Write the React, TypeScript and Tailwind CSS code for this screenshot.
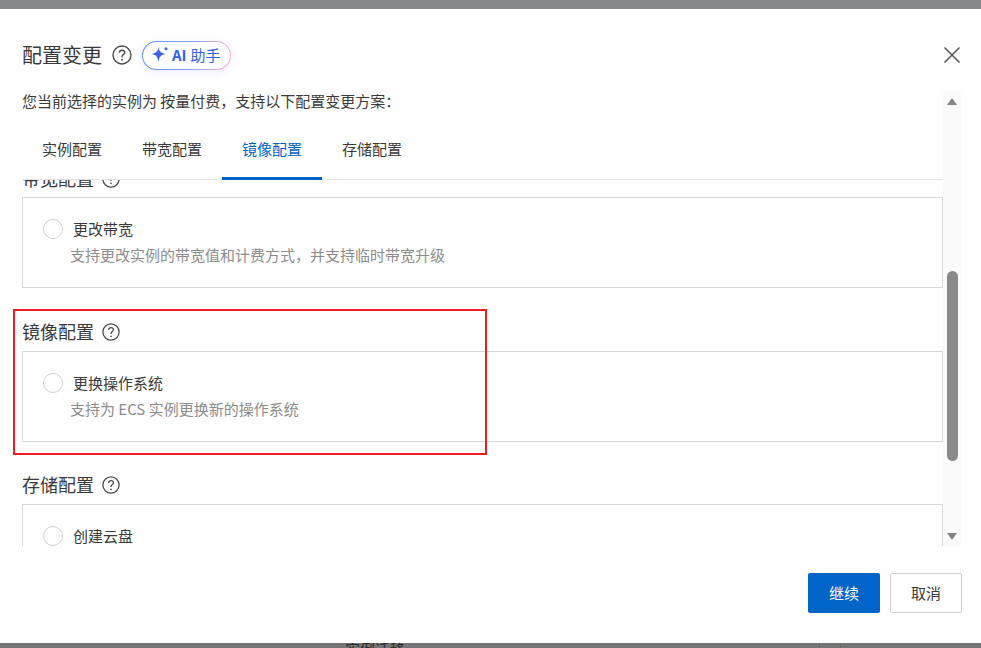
const font = { cn: `font-['Noto_Sans_CJK_SC','Liberation_Sans',sans-serif]` };

function HelpIcon({ size = "w-[20px] h-[20px]" }: { size?: string }) {
  return (
    <svg viewBox="0 0 20 20" className={`${size} shrink-0 text-[#4a4a4a]`} fill="none">
      <circle cx="10" cy="10" r="9" stroke="currentColor" strokeWidth="1.4" />
      <path
        d="M7.4 7.8c0-1.5 1.2-2.6 2.7-2.6s2.6 1 2.6 2.3c0 1-.5 1.6-1.4 2.2-.9.6-1.3 1.1-1.3 2.1v.4"
        stroke="currentColor"
        strokeWidth="1.4"
      />
      <circle cx="10" cy="14.8" r="0.95" fill="currentColor" />
    </svg>
  );
}

function Sparkle() {
  return (
    <svg viewBox="0 0 18 18" className="h-[18px] w-[18px] shrink-0" fill="#3f63e8">
      <path d="M7.5 1c.7 4.400 2.300 6 6.800 7-4.500 1-6.100 2.600-6.800 8.500C6.800 10.600 5.200 9 .8 8c4.400-1 6-2.600 6.700-7z" />
      <circle cx="15" cy="2.800" r="1.500" />
    </svg>
  );
}

function SectionTitle({ title }: { title: string }) {
  return (
    <div className="flex h-[26px] items-center gap-[8px]">
      <span className="pb-[2px] text-[18px] leading-[24px] text-[#3a3a3a]">{title}</span>
      <HelpIcon size="h-[18px] w-[18px]" />
    </div>
  );
}

function OptionCard({ title, description }: { title: string; description?: string }) {
  return (
    <div className="h-[91px] border border-[#d9d9d9] bg-white pl-[20px] pt-[21px]">
      <div className="flex h-[20px] items-center gap-[10px]">
        <span className="h-[20px] w-[20px] rounded-full border border-[#cfcfcf] bg-white" />
        <span className="pb-[1px] text-[15px] leading-[19px] text-[#3a3a3a]">{title}</span>
      </div>
      {description && <p className="ml-[27px] mt-[6px] text-[15px] leading-[20px] text-[#8c8c8c]">{description}</p>}
    </div>
  );
}

const tabs = ["实例配置", "带宽配置", "镜像配置", "存储配置"];

export default function App() {
  return (
    <div className={`relative flex h-[648px] w-[981px] flex-col overflow-hidden bg-[#87888c] ${font.cn}`}>
      <div className="h-[9px] shrink-0" />

      <div className="flex h-[634px] shrink-0 flex-col bg-white">
        {/* header */}
        <div className="flex h-[81px] shrink-0 items-start justify-between pl-[22px] pr-[21px] pt-[31px]">
          <div className="flex items-center">
            <span className="text-[20px] leading-[30px] text-[#3a3a3a]">配置变更</span>
            <span className="ml-[10px]">
              <HelpIcon />
            </span>
            <div className="ml-[10px] h-[29px] w-[89px] rounded-full bg-[linear-gradient(100deg,#5f8cf5,#8aa4fb_55%,#ffb3c7)] p-px shadow-[0_2px_8px_rgba(90,110,240,0.12)]">
              <div className="flex h-full w-full items-center rounded-full bg-white pl-[8px] text-[15px] text-[#2f63e0]">
                <Sparkle />
                <span className="ml-[3px] font-bold">AI</span>
                <span className="ml-[4px]">助手</span>
              </div>
            </div>
          </div>
          <svg viewBox="0 0 16 16" className="mt-[7px] h-[16px] w-[16px] text-[#555]" fill="none">
            <path d="M0.500 0.500 15.500 15.500M15.500 0.500 0.500 15.500" stroke="currentColor" strokeWidth="1.500" />
          </svg>
        </div>

        {/* body */}
        <div className="flex h-[456px] shrink-0 pl-[22px] pr-[20px]">
          <div className="flex w-[921px] shrink-0 flex-col">
            <p className="mt-[1px] text-[15px] leading-[20px] text-[#3a3a3a]">
              您当前选择的实例为 按量付费，支持以下配置变更方案：
            </p>
            <div className="mt-[11px] flex h-[58px] shrink-0 border-b border-[#e3e3e3]">
              {tabs.map((tab, i) => (
                <div
                  key={tab}
                  className={
                    i === 2
                      ? "-mb-px flex w-[100px] items-start justify-center border-b-[3px] border-[#0064c8] pt-[17px] text-[15px] leading-[20px] text-[#0064c8]"
                      : "flex w-[100px] items-start justify-center pt-[17px] text-[15px] leading-[20px] text-[#3a3a3a]"
                  }
                >
                  {tab}
                </div>
              ))}
            </div>
            <div className="min-h-0 flex-1 overflow-hidden">
              <div className="-mt-[14px] flex flex-col">
                <SectionTitle title="带宽配置" />
                <div className="mt-[5px]">
                  <OptionCard title="更改带宽" description="支持更改实例的带宽值和计费方式，并支持临时带宽升级" />
                </div>
                <div className="mt-[31px]">
                  <SectionTitle title="镜像配置" />
                </div>
                <div className="mt-[6px]">
                  <OptionCard title="更换操作系统" description="支持为 ECS 实例更换新的操作系统" />
                </div>
                <div className="mt-[30px]">
                  <SectionTitle title="存储配置" />
                </div>
                <div className="mt-[6px]">
                  <OptionCard title="创建云盘" />
                </div>
              </div>
            </div>
          </div>
          <div className="flex w-[18px] shrink-0 flex-col items-center bg-[#fbfbfb]">
            <span className="mt-[8px] h-0 w-0 border-x-[5px] border-b-[7px] border-x-transparent border-b-[#858585]" />
            <span className="mt-[166px] h-[190px] w-[11px] rounded-full bg-[#8a8a8a]" />
            <span className="mt-[72px] h-0 w-0 border-x-[5px] border-t-[7px] border-x-transparent border-t-[#858585]" />
          </div>
        </div>

        {/* footer */}
        <div className="flex flex-1 justify-end gap-[10px] pr-[19px] pt-[27px]">
          <button className="h-[40px] w-[72px] rounded-[2px] bg-[#0064c8] text-[15px] text-white">继续</button>
          <button className="h-[40px] w-[72px] rounded-[2px] border border-[#cfcfcf] bg-white text-[15px] text-[#3a3a3a]">
            取消
          </button>
        </div>
      </div>

      <div className="relative h-[5px] shrink-0 overflow-hidden bg-[#757577]">
        <span className="absolute left-[345px] -top-[4px] text-[15px] leading-[20px] text-[#2a2a2a]">实例迁移</span>
        <span className="absolute left-[819px] top-0 h-[5px] w-px bg-[#666]" />
        <span className="absolute left-[840px] top-0 h-[5px] w-px bg-[#666]" />
      </div>

      {/* red highlight drawn over the screenshot */}
      <div className="absolute left-[13px] top-[309px] h-[146px] w-[474px] border-2 border-[#ee1c25]" />
    </div>
  );
}
